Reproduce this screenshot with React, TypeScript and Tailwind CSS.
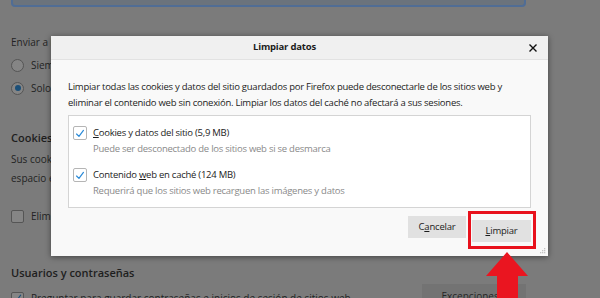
import React from "react";

const font = { fontFamily: '"Open Sans", "Noto Sans", sans-serif' };

const Check = ({ className = "", color = "#2a8ad8" }: { className?: string; color?: string }) => (
  <svg viewBox="0 0 14 14" className={className} fill="none">
    <path d="M3 7.6 L5.8 10.4 L11 3.4" stroke={color} strokeWidth="1.4" strokeLinecap="round" strokeLinejoin="round" />
  </svg>
);

const DialogItem = ({ label, sub, className = "" }: { label: React.ReactNode; sub: string; className?: string }) => (
  <div className={`flex gap-[6px] ${className}`}>
    <div className="w-[14px] h-[14px] mt-[1px] rounded-[2px] border border-[#b5b5b5] bg-white shrink-0 flex items-center justify-center">
      <Check className="w-[13px] h-[13px]" />
    </div>
    <div className="flex flex-col">
      <span className="text-[9.5px] tracking-[-0.25px] leading-[16px] text-[#1c1c1c]">{label}</span>
      <span className="text-[9.5px] tracking-[-0.25px] leading-[16px] text-[#8a8a8a]">{sub}</span>
    </div>
  </div>
);

export default function App() {
  return (
    <div className="relative w-[600px] h-[298px] overflow-hidden bg-[#7b7b7b] text-[#232323]" style={font}>
      {/* page behind the modal */}
      <div className="flex flex-col pl-[11px]">
        <div className="w-[515px] h-[7px] rounded-b-[4px] border-2 border-t-0 border-[#506d95] bg-[#6b737c]" />
        <div className="mt-[26px] text-[10px] leading-[18px] whitespace-nowrap">
          Enviar a los sitios web una señal de “No rastrear” indicando que no quiere ser rastreado
        </div>
        <div className="mt-[4px] flex items-center gap-[7px] h-[20px]">
          <div className="w-[13px] h-[13px] rounded-full border border-[#555] bg-[#858585]" />
          <span className="text-[10px] whitespace-nowrap">Siempre</span>
        </div>
        <div className="mt-[3px] flex items-center gap-[7px] h-[20px]">
          <div className="w-[13px] h-[13px] rounded-full border border-[#555] bg-[#858585] flex items-center justify-center">
            <div className="w-[6px] h-[6px] rounded-full bg-[#1b4f78]" />
          </div>
          <span className="text-[10px] whitespace-nowrap">Solo cuando Firefox está configurado para bloquear los rastreadores conocidos</span>
        </div>
        <div className="mt-[30px] text-[11px] leading-[20px] font-semibold text-[#1e1e1e] whitespace-nowrap">Cookies y datos del sitio</div>
        <div className="mt-[2px] text-[10px] leading-[19px] whitespace-nowrap">
          Sus cookies, datos del sitio y caché almacenados ocupan actualmente un 6,0 MB de
        </div>
        <div className="text-[10px] leading-[19px] whitespace-nowrap">espacio en disco.</div>
        <div className="mt-[18px] flex items-center gap-[7px] h-[20px]">
          <div className="w-[13px] h-[13px] rounded-[2px] border border-[#555] bg-[#858585]" />
          <span className="text-[10px] whitespace-nowrap">Eliminar cookies y datos del sitio cuando se cierre Firefox</span>
        </div>
        <div className="mt-[37px] text-[11px] leading-[20px] font-semibold text-[#1e1e1e] whitespace-nowrap">Usuarios y contraseñas</div>
        <div className="mt-[5px] flex items-start">
          <div className="flex items-center gap-[7px] h-[20px] w-[411px]">
            <div className="w-[13px] h-[13px] rounded-[2px] border border-[#555] bg-[#858585] flex items-center justify-center">
              <Check className="w-[12px] h-[12px]" color="#1b4f78" />
            </div>
            <span className="text-[10px] whitespace-nowrap">Preguntar para guardar contraseñas e inicios de sesión de sitios web</span>
          </div>
          <div className="-mt-[4px] w-[104px] h-[24px] bg-[#737373] flex justify-center pt-[5px] text-[10px] text-[#262626]">
            Excepciones…
          </div>
        </div>
      </div>

      {/* modal dialog */}
      <div className="absolute left-[51px] top-[36px] w-[497px] h-[220px] bg-[#f9f9f9] shadow-[0_1px_6px_rgba(0,0,0,0.45)] flex flex-col">
        <div className="h-[24px] bg-[#f0f0f0] border-b border-[#e2e2e2] flex items-center">
          <div className="flex-1 text-center text-[9.5px] tracking-[-0.2px] font-bold text-[#1c1c1c]">Limpiar datos</div>
          <div className="w-[30px] flex justify-center">
            <svg viewBox="0 0 8 8" className="w-[8px] h-[8px]">
              <path d="M0.5 0.5 L7.5 7.5 M7.5 0.5 L0.5 7.5" stroke="#111" strokeWidth="1.4" />
            </svg>
          </div>
        </div>
        <div className="flex flex-col px-[17px] pt-[19px]">
          <p className="text-[9.5px] tracking-[-0.25px] leading-[16px] text-[#1c1c1c] whitespace-nowrap">
            Limpiar todas las cookies y datos del sitio guardados por Firefox puede desconectarle de los sitios web y
            <br />
            eliminar el contenido web sin conexión. Limpiar los datos del caché no afectará a sus sesiones.
          </p>
          <div className="mt-[4px] h-[93px] bg-white border border-[#d4d4d4] pl-[4px] pt-[9px] flex flex-col">
            <DialogItem
              label={
                <>
                  <span className="underline">C</span>ookies y datos del sitio (5,9 MB)
                </>
              }
              sub="Puede ser desconectado de los sitios web si se desmarca"
            />
            <DialogItem
              className="mt-[10px]"
              label={
                <>
                  Contenido <span className="underline">w</span>eb en caché (124 MB)
                </>
              }
              sub="Requerirá que los sitios web recarguen las imágenes y datos"
            />
          </div>
          <div className="mt-[8px] flex justify-end gap-[6px]">
            <button className="w-[58px] h-[22px] bg-[#e1e1e1] text-[9.5px] tracking-[-0.2px] text-[#1c1c1c]">
              C<span className="underline">a</span>ncelar
            </button>
            <div className="relative">
              <button className="w-[59px] h-[22px] bg-[#e1e1e1] text-[9.5px] tracking-[-0.2px] text-[#1c1c1c]">
                <span className="underline">L</span>impiar
              </button>
              <div className="absolute -left-[4px] -right-[5px] -top-[5px] -bottom-[7px] border-[3px] border-[#e8111c]" />
            </div>
          </div>
        </div>
        <svg viewBox="0 0 6 6" className="absolute right-[2px] bottom-[2px] w-[6px] h-[6px]">
          <rect x="4" y="0" width="1.3" height="1.3" fill="#c4c4c4" />
          <rect x="2" y="2" width="1.3" height="1.3" fill="#c4c4c4" />
          <rect x="4" y="2" width="1.3" height="1.3" fill="#c4c4c4" />
          <rect x="0" y="4" width="1.3" height="1.3" fill="#c4c4c4" />
          <rect x="2" y="4" width="1.3" height="1.3" fill="#c4c4c4" />
          <rect x="4" y="4" width="1.3" height="1.3" fill="#c4c4c4" />
        </svg>
      </div>

      {/* red annotation arrow */}
      <svg viewBox="0 0 42 46" className="absolute left-[486px] top-[252px] w-[42px] h-[46px]">
        <polygon points="21,0 42,24 32,24 32,46 11,46 11,24 0,24" fill="#ea1520" />
      </svg>
    </div>
  );
}
